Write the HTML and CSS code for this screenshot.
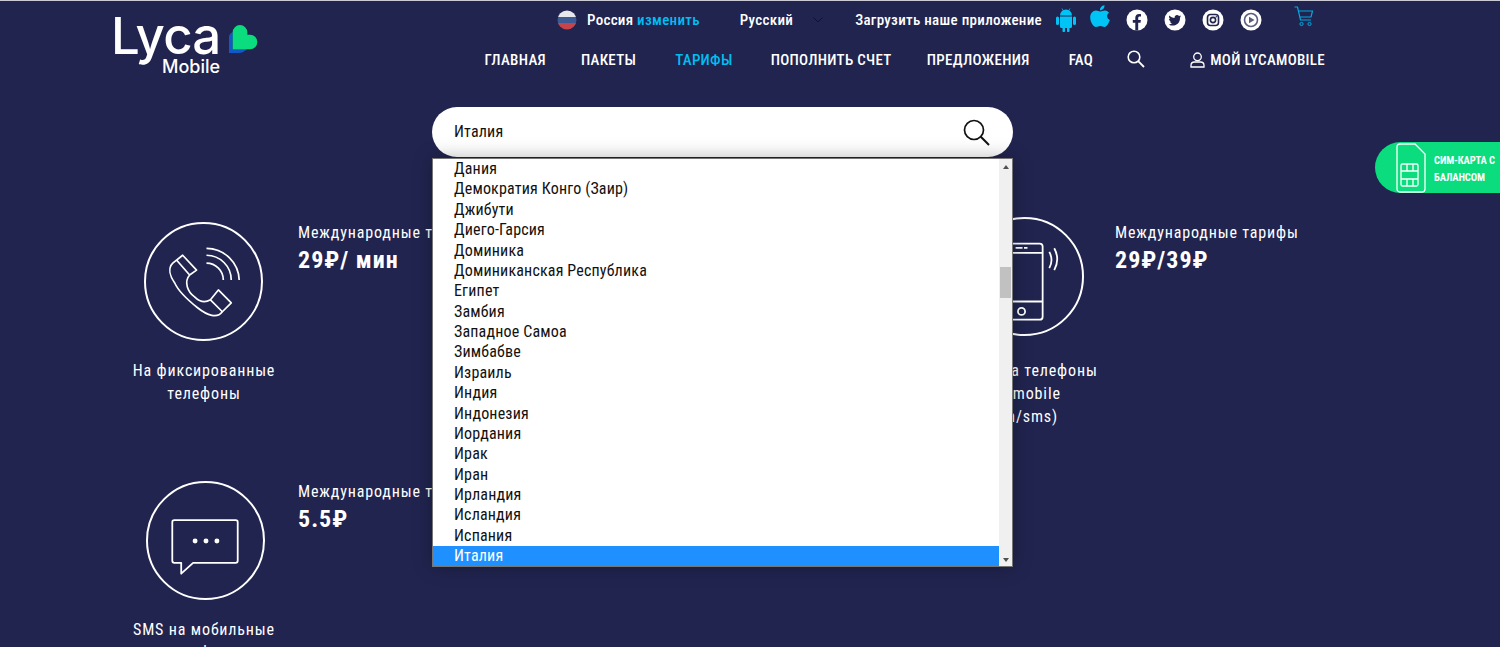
FILE: index.html
```html
<!DOCTYPE html>
<html lang="ru">
<head>
    <meta charset="UTF-8">
    <meta name="viewport" content="width=device-width, initial-scale=1.0">
    <title>Международные тарифы</title>
    <link rel="stylesheet" href="styles.css">
</head>
<body>
    <header class="site-header">
        <a class="logo" href="#">
            <span class="logo-word">Lyca</span>
            <span class="logo-sub">Mobile</span>
            <svg class="logo-heart" viewBox="0 0 29 29" width="29" height="29">
                <path fill="#1259c8" d="M0 28 V12 Q0 9 3.700 7 V24 H18 Q14 28 10 28 Z"/>
                <path fill="#0bdc7e" d="M3.700 24.300 V7.300 A7.300 7.300 0 0 1 18.300 7.300 V9.700 H21 A7.300 7.300 0 0 1 21 24.300 Z"/>
            </svg>
        </a>
        <div class="header-right">
            <div class="top-row">
                <svg class="flag" viewBox="0 0 20 20" width="20" height="20">
                    <clipPath id="flagClip"><circle cx="10" cy="10" r="9.500"/></clipPath>
                    <g clip-path="url(#flagClip)">
                        <rect width="20" height="7" fill="#e8e8ec"/>
                        <rect y="7" width="20" height="6" fill="#3d5a94"/>
                        <rect y="13" width="20" height="7" fill="#c8434a"/>
                    </g>
                </svg>
                <span class="country">Россия <a href="#">изменить</a></span>
                <span class="lang">Русский</span>
                <svg class="lang-arrow" viewBox="0 0 10 6" width="10" height="6"><path d="M.5 .5 L5 5 L9.500 .5" fill="none" stroke="#0f1130" stroke-width="1"/></svg>
                <span class="app-label">Загрузить наше приложение</span>
                <svg class="icon-android" viewBox="0 0 20 24" width="20" height="24">
                    <path fill="#00c4f5" d="M4 7.500 a6 6 0 0 1 12 0 Z M4 8.500 h12 v10 a1.500 1.500 0 0 1 -1.500 1.500 h-1 v3 a1.200 1.200 0 0 1 -2.500 0 v-3 h-2 v3 a1.200 1.200 0 0 1 -2.500 0 v-3 h-1 a1.500 1.500 0 0 1 -1.500 -1.500 Z"/>
                    <rect fill="#00c4f5" x="0" y="8.500" width="3" height="8.500" rx="1.500"/>
                    <rect fill="#00c4f5" x="17" y="8.500" width="3" height="8.500" rx="1.500"/>
                    <path stroke="#00c4f5" stroke-width=".8" d="M6 .5 L7.500 3 M14 .5 L12.500 3"/>
                </svg>
                <svg class="icon-apple" viewBox="0 0 20 24" width="20" height="24">
                    <path fill="#00c4f5" d="M10.200 6.500 C12 6.500 13 5.500 15 5.500 C16.800 5.500 18.200 6.500 19 7.800 C16.200 9.500 16.500 13.500 19.800 15 C18.800 18 16.800 22 14.500 22 C13 22 12 21 10.300 21 C8.500 21 7.500 22 6 22 C3.500 22 .2 17 .2 12.500 C.2 8.500 2.800 5.500 6 5.500 C7.800 5.500 9 6.500 10.200 6.500 Z M10 5.200 C9.800 2.800 11.800 .4 14.500 .2 C14.800 2.800 12.500 5.400 10 5.200 Z"/>
                </svg>
                <svg class="icon-social" viewBox="0 0 22 22" width="22" height="22">
                    <circle cx="11" cy="11" r="10.500" fill="#fff"/>
                    <path fill="#21244f" d="M9.300 21.500 V13.800 H6.800 V11 H9.300 V8.800 C9.300 6.300 10.800 5 13 5 C14 5 15 5.200 15 5.200 V7.600 H13.800 C12.600 7.600 12.200 8.300 12.200 9.100 V11 H14.900 L14.500 13.800 H12.200 V21.500 Z"/>
                </svg>
                <svg class="icon-social" viewBox="0 0 22 22" width="22" height="22">
                    <circle cx="11" cy="11" r="10.500" fill="#fff"/>
                    <path fill="#21244f" d="M17 7.300 C16.500 7.500 16 7.700 15.500 7.700 C16 7.400 16.500 6.900 16.700 6.200 C16.200 6.500 15.600 6.800 15 6.900 C14.500 6.400 13.800 6 13.100 6 C11.500 6 10.200 7.500 10.600 9.100 C8.500 9 6.600 8 5.400 6.500 C4.700 7.600 5 9.200 6.200 10 C5.800 10 5.300 9.900 5 9.700 C5 11 5.900 12.100 7.100 12.400 C6.700 12.500 6.300 12.500 5.900 12.400 C6.200 13.400 7.200 14.200 8.400 14.300 C7.200 15.200 5.900 15.500 4.700 15.400 C9.800 18.500 16.500 15.200 16 8.500 C16.500 8.200 16.800 7.800 17 7.300 Z"/>
                </svg>
                <svg class="icon-social" viewBox="0 0 22 22" width="22" height="22">
                    <circle cx="11" cy="11" r="10.500" fill="#fff"/>
                    <rect x="5.500" y="5.500" width="11" height="11" rx="3" fill="none" stroke="#21244f" stroke-width="1.600"/>
                    <circle cx="11" cy="11" r="2.600" fill="none" stroke="#21244f" stroke-width="1.600"/>
                    <circle cx="14.300" cy="7.700" r=".7" fill="#21244f"/>
                </svg>
                <svg class="icon-social" viewBox="0 0 22 22" width="22" height="22">
                    <circle cx="11" cy="11" r="10.500" fill="#fff"/>
                    <circle cx="11" cy="11" r="6.500" fill="none" stroke="#5b5d80" stroke-width="1.600"/>
                    <path fill="#5b5d80" d="M9 7.800 L14.500 11 L9 14.200 Z"/>
                </svg>
                <svg class="icon-cart" viewBox="0 0 20 22" width="20" height="22">
                    <path fill="none" stroke="#00a9e0" stroke-width="1.200" d="M.5 1 H3.500 L6.500 14 H17 M4.500 5 H18.500 L17 11 H5.800"/>
                    <circle cx="7.500" cy="18" r="1.600" fill="none" stroke="#00a9e0"/>
                    <circle cx="15.500" cy="18" r="1.600" fill="none" stroke="#00a9e0"/>
                </svg>
            </div>
            <nav class="main-nav">
                <a href="#">ГЛАВНАЯ</a>
                <a href="#">ПАКЕТЫ</a>
                <a href="#" class="active">ТАРИФЫ</a>
                <a href="#">ПОПОЛНИТЬ СЧЕТ</a>
                <a href="#">ПРЕДЛОЖЕНИЯ</a>
                <a href="#" class="nav-faq">FAQ</a>
                <svg class="nav-search" viewBox="0 0 18 18" width="18" height="18">
                    <circle cx="7" cy="7" r="5.800" fill="none" stroke="#fff" stroke-width="1.600"/>
                    <path d="M11.200 11.200 L17 17" stroke="#fff" stroke-width="1.800"/>
                </svg>
                <a href="#" class="account">
                    <svg viewBox="0 0 15 16" width="15" height="16">
                        <circle cx="7.500" cy="4.800" r="3.800" fill="none" stroke="#fff" stroke-width="1.300"/>
                        <path d="M1 15 V13.500 C1 11 3 10 4.500 10 H10.500 C12 10 14 11 14 13.500 V15 Z" fill="none" stroke="#fff" stroke-width="1.300"/>
                    </svg>
                    МОЙ LYCAMOBILE
                </a>
            </nav>
        </div>
    </header>

    <main>
        <div class="search-wrap">
            <div class="search-box">
                <span>Италия</span>
                <svg viewBox="0 0 27 27" width="27" height="27">
                    <circle cx="11" cy="11" r="9.500" fill="none" stroke="#111" stroke-width="1.700"/>
                    <path d="M17.800 17.800 L26 26" stroke="#111" stroke-width="2"/>
                </svg>
            </div>
            <div class="dropdown">
                <ul class="dropdown-list">
                    <li>Дания</li>
                    <li>Демократия Конго (Заир)</li>
                    <li>Джибути</li>
                    <li>Диего-Гарсия</li>
                    <li>Доминика</li>
                    <li>Доминиканская Республика</li>
                    <li>Египет</li>
                    <li>Замбия</li>
                    <li>Западное Самоа</li>
                    <li>Зимбабве</li>
                    <li>Израиль</li>
                    <li>Индия</li>
                    <li>Индонезия</li>
                    <li>Иордания</li>
                    <li>Ирак</li>
                    <li>Иран</li>
                    <li>Ирландия</li>
                    <li>Исландия</li>
                    <li>Испания</li>
                    <li class="selected">Италия</li>
                </ul>
                <div class="scrollbar">
                    <span class="arrow-up"></span>
                    <span class="thumb"></span>
                    <span class="arrow-down"></span>
                </div>
            </div>
        </div>

        <section class="tariffs">
            <div class="tariff">
                <div class="tariff-side">
                    <div class="circle">
                        <svg viewBox="0 0 116 116" width="116" height="116">
                            <path fill="none" stroke="#fff" stroke-width="1.700" stroke-linejoin="round" d="M37 31 L51 46 L44 51 C38 58 42 68 49 73 C54 78 60 79 65 76 L73 66 L86 79 L77 88 C72 95 62 92 52 84 C42 76 33 68 29 59 C24 52 22 44 27 39 Z M31 36 L44 51 M65 76 L77 88"/>
                            <path fill="none" stroke="#fff" stroke-width="1.700" d="M61 39 A17 17 0 0 1 78 56 M61 31 A25 25 0 0 1 86 56 M61 24 A33 33 0 0 1 94 56"/>
                        </svg>
                    </div>
                    <p>На фиксированные<br>телефоны</p>
                </div>
                <div class="tariff-info">
                    <div class="tariff-title">Международные тарифы</div>
                    <div class="tariff-price">29₽/ мин</div>
                </div>
            </div>
            <div class="tariff">
                <div class="tariff-side">
                    <div class="circle"></div>
                    <p>На мобильные<br>телефоны</p>
                </div>
            </div>
            <div class="tariff tariff-raised">
                <div class="tariff-side">
                    <div class="circle">
                        <svg viewBox="0 0 116 116" width="116" height="116">
                            <rect x="34" y="24.300" width="42.300" height="76.700" rx="3" fill="none" stroke="#fff" stroke-width="1.800"/>
                            <path d="M34 33.700 H76 M34 82.700 H76" stroke="#fff" stroke-width="1.800"/>
                            <path d="M49 28.700 H56 M57.500 28.700 H61" stroke="#fff" stroke-width="1.800"/>
                            <circle cx="55" cy="92.700" r="3.600" fill="none" stroke="#fff" stroke-width="1.800"/>
                            <path d="M83 32.700 Q87.500 41 83 49 M88 29 Q94 40 88 51" fill="none" stroke="#fff" stroke-width="1.800"/>
                        </svg>
                    </div>
                    <p>Звонки на телефоны<br>Lycamobile<br>(min/sms)</p>
                </div>
                <div class="tariff-info">
                    <div class="tariff-title">Международные тарифы</div>
                    <div class="tariff-price">29₽/39₽</div>
                </div>
            </div>
            <div class="tariff tariff-sms">
                <div class="tariff-side">
                    <div class="circle">
                        <svg viewBox="0 0 116 116" width="116" height="116">
                            <path fill="none" stroke="#fff" stroke-width="1.800" stroke-linejoin="round" d="M24.500 39 a2 2 0 0 1 2 -2 H88.500 a2 2 0 0 1 2 2 V78 a2 2 0 0 1 -2 2 H45.500 L33.500 91 V80 H26.500 a2 2 0 0 1 -2 -2 Z"/>
                            <circle cx="47.500" cy="58" r="2.500" fill="#fff"/>
                            <circle cx="58.500" cy="58" r="2.500" fill="#fff"/>
                            <circle cx="69.500" cy="58" r="2.500" fill="#fff"/>
                        </svg>
                    </div>
                    <p>SMS на мобильные<br>телефоны</p>
                </div>
                <div class="tariff-info">
                    <div class="tariff-title">Международные тарифы</div>
                    <div class="tariff-price">5.5₽</div>
                </div>
            </div>
        </section>
    </main>

    <a class="sim-tab" href="#">
        <svg viewBox="0 0 30 50" width="30" height="50">
            <path fill="none" stroke="#fff" stroke-width="1.300" d="M1 4 a3 3 0 0 1 3 -3 H19 L29 11 V46 a3 3 0 0 1 -3 3 H4 a3 3 0 0 1 -3 -3 Z"/>
            <rect x="5" y="21" width="17" height="22" rx="1.500" fill="none" stroke="#fff" stroke-width="1.300"/>
            <path d="M5 28 H22 M5 36 H22 M11 21 V28 M17 21 V28 M11 36 V43 M17 36 V43" stroke="#fff" stroke-width="1.300"/>
        </svg>
        <span>СИМ-КАРТА С БАЛАНСОМ</span>
    </a>
</body>
</html>
```

FILE: styles.css
```css
html, body {
    height: 100%;
    overflow: hidden;
}
body {
    margin: 0;
    background: #21244f;
    color: #fff;
    font-family: "Roboto Condensed", Roboto, "Liberation Sans", sans-serif;
    font-stretch: 75%;
    border-top: 1px solid #c9cad6;
}
a {
    color: inherit;
    text-decoration: none;
}

.site-header {
    display: flex;
    justify-content: space-between;
    height: 84px;
    padding: 0 175px 0 113px;
}
.logo {
    position: relative;
    display: block;
    width: 145px;
    height: 84px;
}
.logo-word {
    position: absolute;
    left: -2px;
    top: 9px;
    font-family: Inter, sans-serif;
    font-size: 51px;
    font-weight: 500;
    font-stretch: normal;
    line-height: 1;
    letter-spacing: -.8px;
}
.logo-sub {
    position: absolute;
    left: 49px;
    top: 57px;
    font-family: Inter, sans-serif;
    font-size: 18px;
    font-weight: 500;
    font-stretch: normal;
    line-height: 1;
}
.logo-heart {
    position: absolute;
    left: 116px;
    top: 24px;
}

.header-right {
    display: flex;
    flex-direction: column;
}
.top-row {
    display: flex;
    align-items: center;
    justify-content: flex-end;
    height: 38px;
    padding-right: 11px;
    font-size: 15px;
    font-weight: 500;
    letter-spacing: .3px;
}
.country {
    margin-left: 10px;
}
.country a {
    color: #00bdf2;
}
.lang {
    margin-left: 40px;
}
.lang-arrow {
    margin-left: 20px;
}
.app-label {
    margin-left: 32px;
}
.icon-android {
    margin-left: 14px;
}
.icon-apple {
    margin-left: 14px;
    margin-top: -6px;
}
.icon-social {
    margin-left: 16px;
}
.icon-cart {
    margin-left: 32px;
    margin-top: -6px;
}

.main-nav {
    display: flex;
    align-items: center;
    justify-content: flex-end;
    gap: 35px;
    height: 40px;
    padding-top: 1px;
    font-size: 15px;
    font-weight: 500;
    letter-spacing: .3px;
}
.main-nav .active {
    color: #00bdf2;
    margin: 0 3px 0 4px;
}
.nav-faq {
    margin: 0 -1px 0 4px;
}
.nav-search {
    margin-top: -3px;
}
.account {
    display: flex;
    align-items: center;
    gap: 5px;
    margin-left: 10px;
}

.search-wrap {
    position: relative;
    width: 581px;
    margin: 22px 0 0 432px;
}
.search-box {
    display: flex;
    align-items: center;
    justify-content: space-between;
    height: 50px;
    padding: 0 23px 0 22px;
    background: #fff;
    border-radius: 25px;
    color: #111;
    font-size: 16px;
    letter-spacing: .17px;
}
.search-box span {
    margin-top: -2px;
}
.dropdown {
    position: absolute;
    top: 51px;
    left: 0;
    z-index: 5;
    display: flex;
    box-sizing: border-box;
    width: 581px;
    height: 409px;
    background: #fff;
    border: 1px solid #767676;
    box-shadow: 0 0 18px rgba(0, 0, 0, .3);
    color: #111;
}
.dropdown-list {
    flex: 1;
    margin: 0;
    padding: 0;
    list-style: none;
    overflow: hidden;
    font-size: 16px;
    line-height: 20.370px;
    letter-spacing: .17px;
}
.dropdown-list li {
    padding-left: 21px;
}
.dropdown-list .selected {
    background: #1e90ff;
    color: #fff;
}
.scrollbar {
    display: flex;
    flex-direction: column;
    align-items: center;
    width: 13px;
    background: #f0f0f0;
}
.arrow-up {
    margin-top: 6px;
    border: 3.500px solid transparent;
    border-top: 0;
    border-bottom: 4px solid #505050;
}
.thumb {
    width: 11px;
    height: 31px;
    margin-top: 98px;
    background: #c1c1c1;
}
.arrow-down {
    margin-top: auto;
    margin-bottom: 4px;
    border: 3.500px solid transparent;
    border-bottom: 0;
    border-top: 4px solid #505050;
}

.tariffs {
    display: grid;
    grid-template-columns: repeat(3, 410px);
    grid-auto-rows: 259px;
    margin-top: 65px;
    padding-left: 130px;
}
.tariff {
    display: flex;
    gap: 20px;
}
.tariff-raised {
    margin-left: -6px;
    gap: 17px;
}
.tariff-side {
    width: 148px;
    flex: none;
    text-align: center;
}
.tariff-raised .tariff-side {
    width: 154px;
}
.tariff-side p {
    margin: 18px 0 0;
    font-size: 16px;
    line-height: 23px;
    letter-spacing: .85px;
    white-space: nowrap;
}
.circle {
    display: flex;
    align-items: center;
    justify-content: center;
    box-sizing: border-box;
    width: 119px;
    height: 119px;
    margin: 0 0 0 14px;
    border: 2px solid #fff;
    border-radius: 50%;
}
.tariff-raised .circle {
    margin: -5px 0 0 21px;
}
.tariff-raised p {
    margin-top: 23px;
}
.tariff-sms .circle {
    margin-left: 16px;
}
.tariff-info {
    padding-top: 1px;
}
.tariff-title {
    font-size: 16px;
    line-height: 20px;
    letter-spacing: .85px;
}
.tariff-price {
    margin-top: 3px;
    font-size: 24px;
    font-weight: 700;
    letter-spacing: 1px;
}

.sim-tab {
    position: absolute;
    top: 142px;
    right: 0;
    display: flex;
    align-items: center;
    gap: 8px;
    width: 125px;
    height: 51px;
    padding-left: 21px;
    box-sizing: border-box;
    background: #0bdc7e;
    border-radius: 26px 0 0 26px;
    font-size: 10.500px;
    font-weight: 700;
    line-height: 17px;
    letter-spacing: -.1px;
}
.sim-tab svg {
    flex: none;
}
.sim-tab span {
    margin-top: 2px;
}
```
